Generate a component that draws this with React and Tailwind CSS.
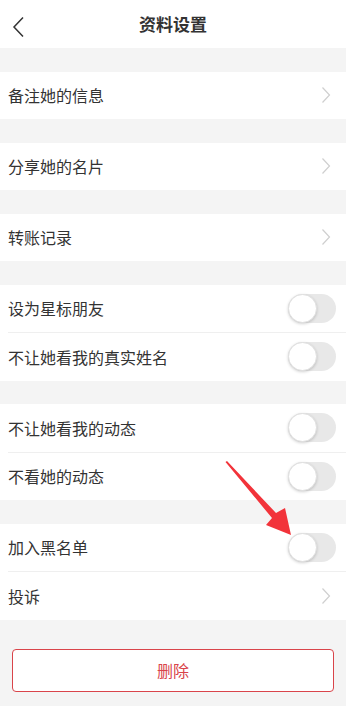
import React from 'react';

const font = { fontFamily: '"Noto Sans CJK SC", "Noto Sans", sans-serif' };

const Chevron = () => (
  <svg width="10" height="18" viewBox="0 0 10 18" fill="none">
    <path d="M1.5 1.5L8.5 9L1.5 16.5" stroke="#cfcfcf" strokeWidth="1.2" />
  </svg>
);

const Toggle = () => (
  <div className="relative w-[48px] h-[29px] rounded-full bg-[#e8e8e8]">
    <div className="absolute left-0 top-0 w-[29px] h-[29px] rounded-full bg-white border border-[#e0e0e0] shadow-[0_1px_3px_rgba(0,0,0,0.18)]" />
  </div>
);

const Row = ({ label, right, divider }) => (
  <div className="relative bg-white">
    <div className="h-[47.5px] flex items-center justify-between pl-[8px] pr-[10px]">
      <span className="text-[16px] text-[#333]">{label}</span>
      {right === 'toggle' ? <Toggle /> : <div className="pr-[5px]"><Chevron /></div>}
    </div>
    {divider && <div className="ml-2 h-px bg-[#efefef]" />}
  </div>
);

const Group = ({ rows }) => (
  <div className="mt-[23.5px]">
    {rows.map((r, i) => (
      <Row key={r.label} label={r.label} right={r.right} divider={i < rows.length - 1} />
    ))}
  </div>
);

export default function App() {
  return (
    <div className="relative w-[346px] h-[706px] bg-[#f4f4f4] overflow-hidden" style={font}>
      <div className="h-12 bg-white flex items-center justify-center relative">
        <svg className="absolute left-[12px] top-[16px]" width="14" height="22" viewBox="0 0 14 22" fill="none">
          <path d="M11 1.5L2 11L11 20.5" stroke="#333" strokeWidth="1.5" />
        </svg>
        <span className="text-[17px] font-bold text-[#333]">资料设置</span>
      </div>

      <Group rows={[{ label: '备注她的信息' }]} />
      <Group rows={[{ label: '分享她的名片' }]} />
      <Group rows={[{ label: '转账记录' }]} />
      <Group rows={[{ label: '设为星标朋友', right: 'toggle' }, { label: '不让她看我的真实姓名', right: 'toggle' }]} />
      <Group rows={[{ label: '不让她看我的动态', right: 'toggle' }, { label: '不看她的动态', right: 'toggle' }]} />
      <Group rows={[{ label: '加入黑名单', right: 'toggle' }, { label: '投诉' }]} />

      <div className="px-3 mt-[29px]">
        <button className="w-full h-[43px] rounded-[4px] border border-[#d9444a] bg-white text-[16px] text-[#d9444a]">
          删除
        </button>
      </div>

      <svg className="absolute left-0 top-0 pointer-events-none" width="346" height="706" viewBox="0 0 346 706">
        <polygon points="225.5,462 227,461 276,513 285,508 291,535 266,525 272,518" fill="#f2333a" />
      </svg>
    </div>
  );
}
